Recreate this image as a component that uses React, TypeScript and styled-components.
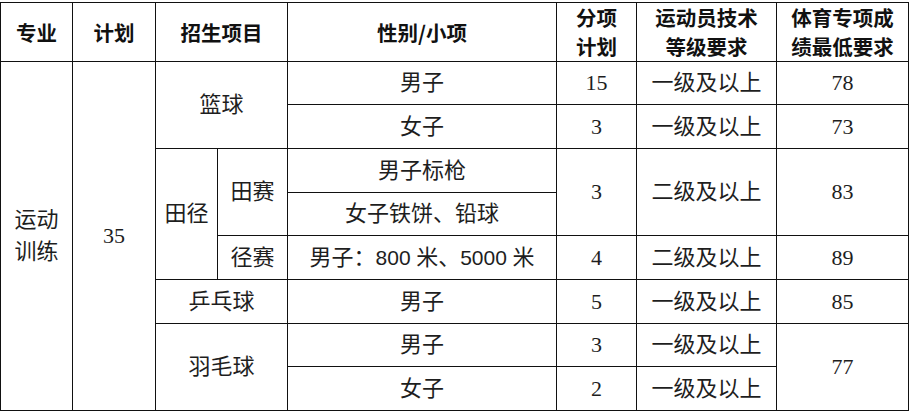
import * as React from 'react';
import styled, { createGlobalStyle } from 'styled-components';

const GlobalStyle = createGlobalStyle`
	html, body {
		margin: 0;
		padding: 0;
		background: #ffffff;
	}
	body {
		font-family: 'Liberation Serif', 'Noto Sans CJK SC', serif;
	}
`;

const COLS = [72, 83, 62, 70, 269, 80, 140, 132];

const Page = styled.div`
	padding: 2px 0 0 0;
	width: 910px;
`;

const Table = styled.table`
	border-collapse: collapse;
	table-layout: fixed;
	width: 909px;
	color: #1e1e1e;
	font-size: 22px;
`;

const Row = styled.tr<{ $h: number }>`
	height: ${(p) => p.$h}px;
`;

const Th = styled.th`
	border: 1px solid #111111;
	padding: 0;
	font-weight: 700;
	font-family: 'Noto Sans CJK SC', sans-serif;
	font-size: 20.5px;
	line-height: 29px;
	color: #111111;
	text-align: center;
	vertical-align: middle;
`;

const Td = styled.td`
	border: 1px solid #111111;
	padding: 0;
	line-height: 32px;
	text-align: center;
	vertical-align: middle;
	font-weight: 400;
`;

// 800 米 / 5000 米 的数字是无衬线
const Sans = styled.span`
	font-family: 'Liberation Sans', 'Noto Sans CJK SC', sans-serif;
	font-size: 21px;
`;

const App: React.FC = () => {
	return (
		<Page>
			<GlobalStyle />
			<Table>
				<colgroup>
					{COLS.map((w, i) => (
						<col key={i} style={{ width: w }} />
					))}
				</colgroup>
				<tbody>
					<Row $h={59}>
						<Th>专业</Th>
						<Th>计划</Th>
						<Th colSpan={2}>招生项目</Th>
						<Th>性别/小项</Th>
						<Th>
							分项
							<br />
							计划
						</Th>
						<Th>
							运动员技术
							<br />
							等级要求
						</Th>
						<Th>
							体育专项成
							<br />
							绩最低要求
						</Th>
					</Row>
					<Row $h={43}>
						<Td rowSpan={8}>
							运动
							<br />
							训练
						</Td>
						<Td rowSpan={8}>35</Td>
						<Td colSpan={2} rowSpan={2}>
							篮球
						</Td>
						<Td>男子</Td>
						<Td>15</Td>
						<Td>一级及以上</Td>
						<Td>78</Td>
					</Row>
					<Row $h={44}>
						<Td>女子</Td>
						<Td>3</Td>
						<Td>一级及以上</Td>
						<Td>73</Td>
					</Row>
					<Row $h={44}>
						<Td rowSpan={3}>田径</Td>
						<Td rowSpan={2}>田赛</Td>
						<Td>男子标枪</Td>
						<Td rowSpan={2}>3</Td>
						<Td rowSpan={2}>二级及以上</Td>
						<Td rowSpan={2}>83</Td>
					</Row>
					<Row $h={43}>
						<Td>女子铁饼、铅球</Td>
					</Row>
					<Row $h={44}>
						<Td>径赛</Td>
						<Td>
							男子：<Sans>800</Sans> 米、<Sans>5000</Sans> 米
						</Td>
						<Td>4</Td>
						<Td>二级及以上</Td>
						<Td>89</Td>
					</Row>
					<Row $h={44}>
						<Td colSpan={2}>乒乓球</Td>
						<Td>男子</Td>
						<Td>5</Td>
						<Td>一级及以上</Td>
						<Td>85</Td>
					</Row>
					<Row $h={43}>
						<Td colSpan={2} rowSpan={2}>
							羽毛球
						</Td>
						<Td>男子</Td>
						<Td>3</Td>
						<Td>一级及以上</Td>
						<Td rowSpan={2}>77</Td>
					</Row>
					<Row $h={44}>
						<Td>女子</Td>
						<Td>2</Td>
						<Td>一级及以上</Td>
					</Row>
				</tbody>
			</Table>
		</Page>
	);
};

export default App;
